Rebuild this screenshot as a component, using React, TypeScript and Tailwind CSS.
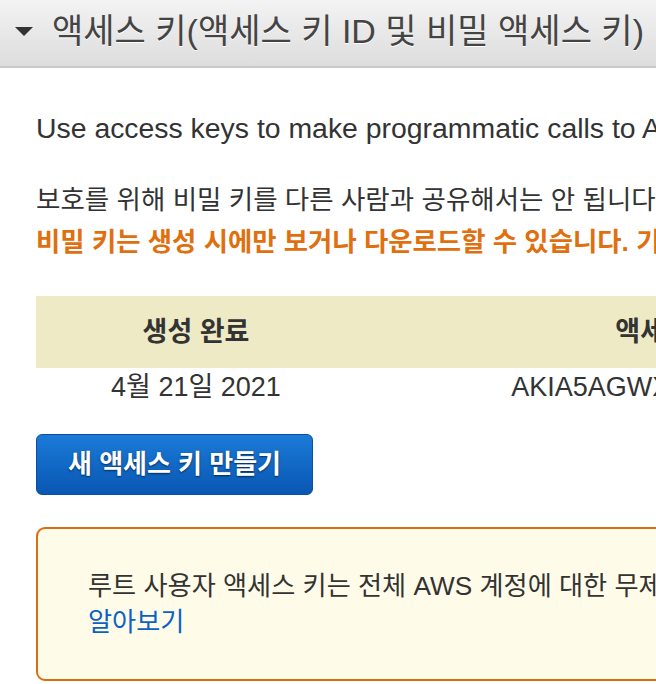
export default function App() {
  const font = { fontFamily: '"Liberation Sans", "Noto Sans CJK KR", sans-serif' };

  return (
    <div className="w-[656px] h-[684px] overflow-hidden bg-white text-[#333]" style={font}>
      <div className="h-[68px] flex items-center gap-[19px] pl-[15px] pb-[4px] bg-gradient-to-b from-[#f3f3f3] to-[#dddddd] border-b-2 border-[#c9c9c9] whitespace-nowrap">
        <svg width="18" height="10" viewBox="0 0 18 10" className="shrink-0 mt-[2px]">
          <path d="M0 0 L18 0 L9 9 Z" fill="#333" />
        </svg>
        <h1 className="text-[34px] leading-[40px] text-[#444] [text-shadow:0_1px_0_#fff]">
          액세스 키(액세스 키 ID 및 비밀 액세스 키)
        </h1>
      </div>

      <div className="pl-[36px] pt-[44px] whitespace-nowrap">
        <p className="text-[28.4px] leading-[32px]">
          Use access keys to make programmatic calls to AWS from the AWS CLI, Tools for PowerShell, AWS SDKs, or direct AWS API calls.
        </p>

        <p className="mt-[40px] text-[26.5px] leading-[32px]">
          보호를 위해 비밀 키를 다른 사람과 공유해서는 안 됩니다. 또한 AWS 모범 사례에 따라 키를 자주 교체하는 것이 좋습니다.
        </p>
        <p className="mt-[10px] text-[26.4px] leading-[32px] font-bold text-[#e0700f]">
          비밀 키는 생성 시에만 보거나 다운로드할 수 있습니다. 기존 비밀 키를 잊어버린 경우 새 액세스 키를 만드십시오.
        </p>

        <div className="mt-[38px] w-[980px] grid grid-cols-[320px_660px] text-[27px]">
          <div className="h-[72px] bg-[#eeeac6] flex items-center justify-center font-bold">생성 완료</div>
          <div className="h-[72px] bg-[#eeeac6] flex items-center justify-center font-bold">액세스 키 ID</div>
          <div className="h-[38px] flex items-center justify-center">4월 21일 2021</div>
          <div className="h-[38px] flex items-center justify-center">AKIA5AGWXQ7RZ3NBLK4E</div>
        </div>

        <button className="mt-[28px] w-[277px] h-[61px] rounded-[6px] border border-[#0b4f9e] bg-gradient-to-b from-[#1b7ad8] to-[#0957b3] text-white text-[26px] font-bold [text-shadow:0_1px_2px_rgba(0,0,0,0.6)]">
          새 액세스 키 만들기
        </button>

        <div className="mt-[32px] w-[900px] h-[154px] rounded-[9px] border-2 border-[#dd6b10] bg-[#fffbe9] pl-[50px] pt-[39px]">
          <p className="text-[26.2px] leading-[36px]">
            루트 사용자 액세스 키는 전체 AWS 계정에 대한 무제한 액세스 권한을 제공합니다.
          </p>
          <a className="text-[26.2px] leading-[36px] text-[#0a63c4]">알아보기</a>
        </div>
      </div>
    </div>
  );
}
